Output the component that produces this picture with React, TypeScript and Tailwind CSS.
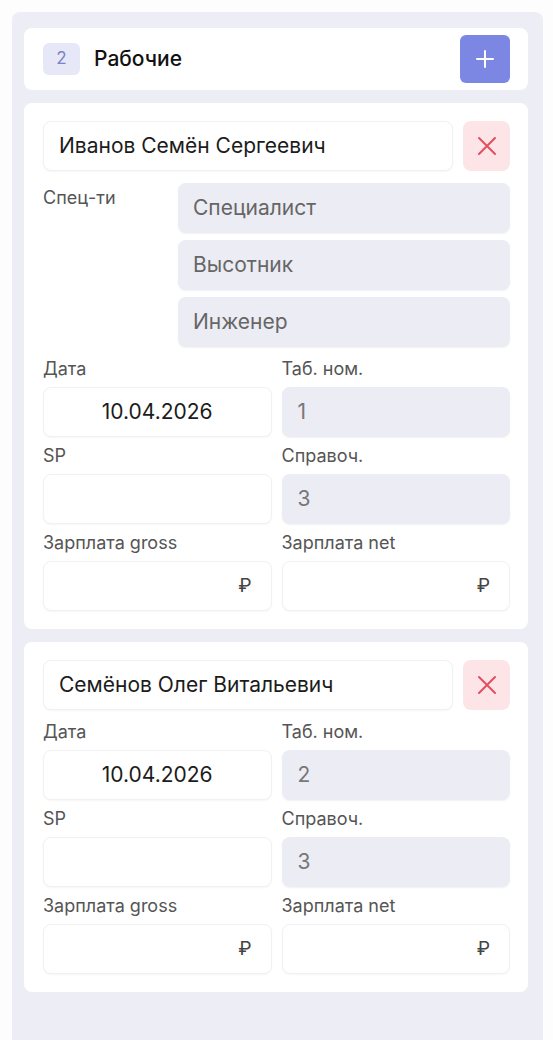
import React from "react";

type Worker = {
    name: string;
    specs: string[];
    date: string;
    tab: string;
    ref: string;
};

const workers: Worker[] = [
    { name: "Иванов Семён Сергеевич", specs: ["Специалист", "Высотник", "Инженер"], date: "10.04.2026", tab: "1", ref: "3" },
    { name: "Семёнов Олег Витальевич", specs: [], date: "10.04.2026", tab: "2", ref: "3" },
];

const box = "h-[50px] rounded-lg bg-white border border-[#f1f1f5] shadow-[0_1px_2px_rgba(0,0,0,0.04)]";
const grey = "h-[50px] rounded-lg bg-[#ececf4] shadow-[0_1px_2px_rgba(0,0,0,0.06)]";

function Field({ label, children }: { label: string; children: React.ReactNode }) {
    return (
        <div className="flex flex-col gap-[8px]">
            <span className="text-[18px] leading-[20px] text-[#555]">{label}</span>
            {children}
        </div>
    );
}

function WorkerCard({ w }: { w: Worker }) {
    return (
        <div className="bg-white rounded-lg pl-[19px] pr-[18px] pt-[18px] pb-[18px] flex flex-col gap-[12px]">
            <div className="flex gap-[10px]">
                <div className={`${box} flex-1 flex items-center px-[15px] text-[21px] text-[#1c1c1c]`}>
                    {w.name}
                </div>
                <button className="w-[47px] h-[50px] rounded-lg bg-[#fde4e7] flex items-center justify-center">
                    <svg width="20" height="20" viewBox="0 0 20 20" fill="none" stroke="#e2505e" strokeWidth="2" strokeLinecap="round">
                        <path d="M2 2L18 18M18 2L2 18" />
                    </svg>
                </button>
            </div>
            {w.specs.length > 0 && (
                <div className="flex">
                    <span className="w-[135px] pt-[5px] text-[18px] leading-[20px] text-[#555]">Спец-ти</span>
                    <div className="flex-1 flex flex-col gap-[7px]">
                        {w.specs.map((s) => (
                            <div key={s} className={`${grey} flex items-center px-[15px] text-[21px] text-[#666]`}>
                                {s}
                            </div>
                        ))}
                    </div>
                </div>
            )}
            <div className="grid grid-cols-2 gap-x-[10px] gap-y-[9px]">
                <Field label="Дата">
                    <div className={`${box} flex items-center justify-center text-[21px] text-[#1c1c1c]`}>{w.date}</div>
                </Field>
                <Field label="Таб. ном.">
                    <div className={`${grey} flex items-center px-[16px] text-[21px] text-[#777]`}>{w.tab}</div>
                </Field>
                <Field label="SP">
                    <div className={box} />
                </Field>
                <Field label="Справоч.">
                    <div className={`${grey} flex items-center px-[16px] text-[21px] text-[#777]`}>{w.ref}</div>
                </Field>
                <Field label="Зарплата gross">
                    <div className={`${box} flex items-center justify-end pr-[19px] text-[19px] text-[#444]`}>₽</div>
                </Field>
                <Field label="Зарплата net">
                    <div className={`${box} flex items-center justify-end pr-[19px] text-[19px] text-[#444]`}>₽</div>
                </Field>
            </div>
        </div>
    );
}

export default function App() {
    return (
        <div className="min-h-[1040px] bg-[#fdfdfd] pt-[12px] pl-[12px] pr-[10px]" style={{ fontFamily: "Inter, 'Noto Sans', sans-serif" }}>
            <div className="min-h-[1028px] bg-[#ededf5] rounded-t-lg pl-[12px] pr-[15px] pt-[16px] flex flex-col gap-[13px]">
                <div className="bg-white rounded-lg h-[62px] pl-[19px] pr-[18px] flex items-center">
                    <div className="w-[37px] h-[32px] rounded-md bg-[#e6e8f8] flex items-center justify-center text-[17px] text-[#7a83c9]">
                        2
                    </div>
                    <span className="ml-[14px] text-[21px] font-medium text-[#111]">Рабочие</span>
                    <button className="ml-auto w-[50px] h-[48px] rounded-md bg-[#7c87e3] flex items-center justify-center">
                        <svg width="20" height="20" viewBox="0 0 20 20" fill="none" stroke="white" strokeWidth="2" strokeLinecap="round">
                            <path d="M10 2V18M2 10H18" />
                        </svg>
                    </button>
                </div>
                {workers.map((w) => (
                    <WorkerCard key={w.name} w={w} />
                ))}
            </div>
        </div>
    );
}
